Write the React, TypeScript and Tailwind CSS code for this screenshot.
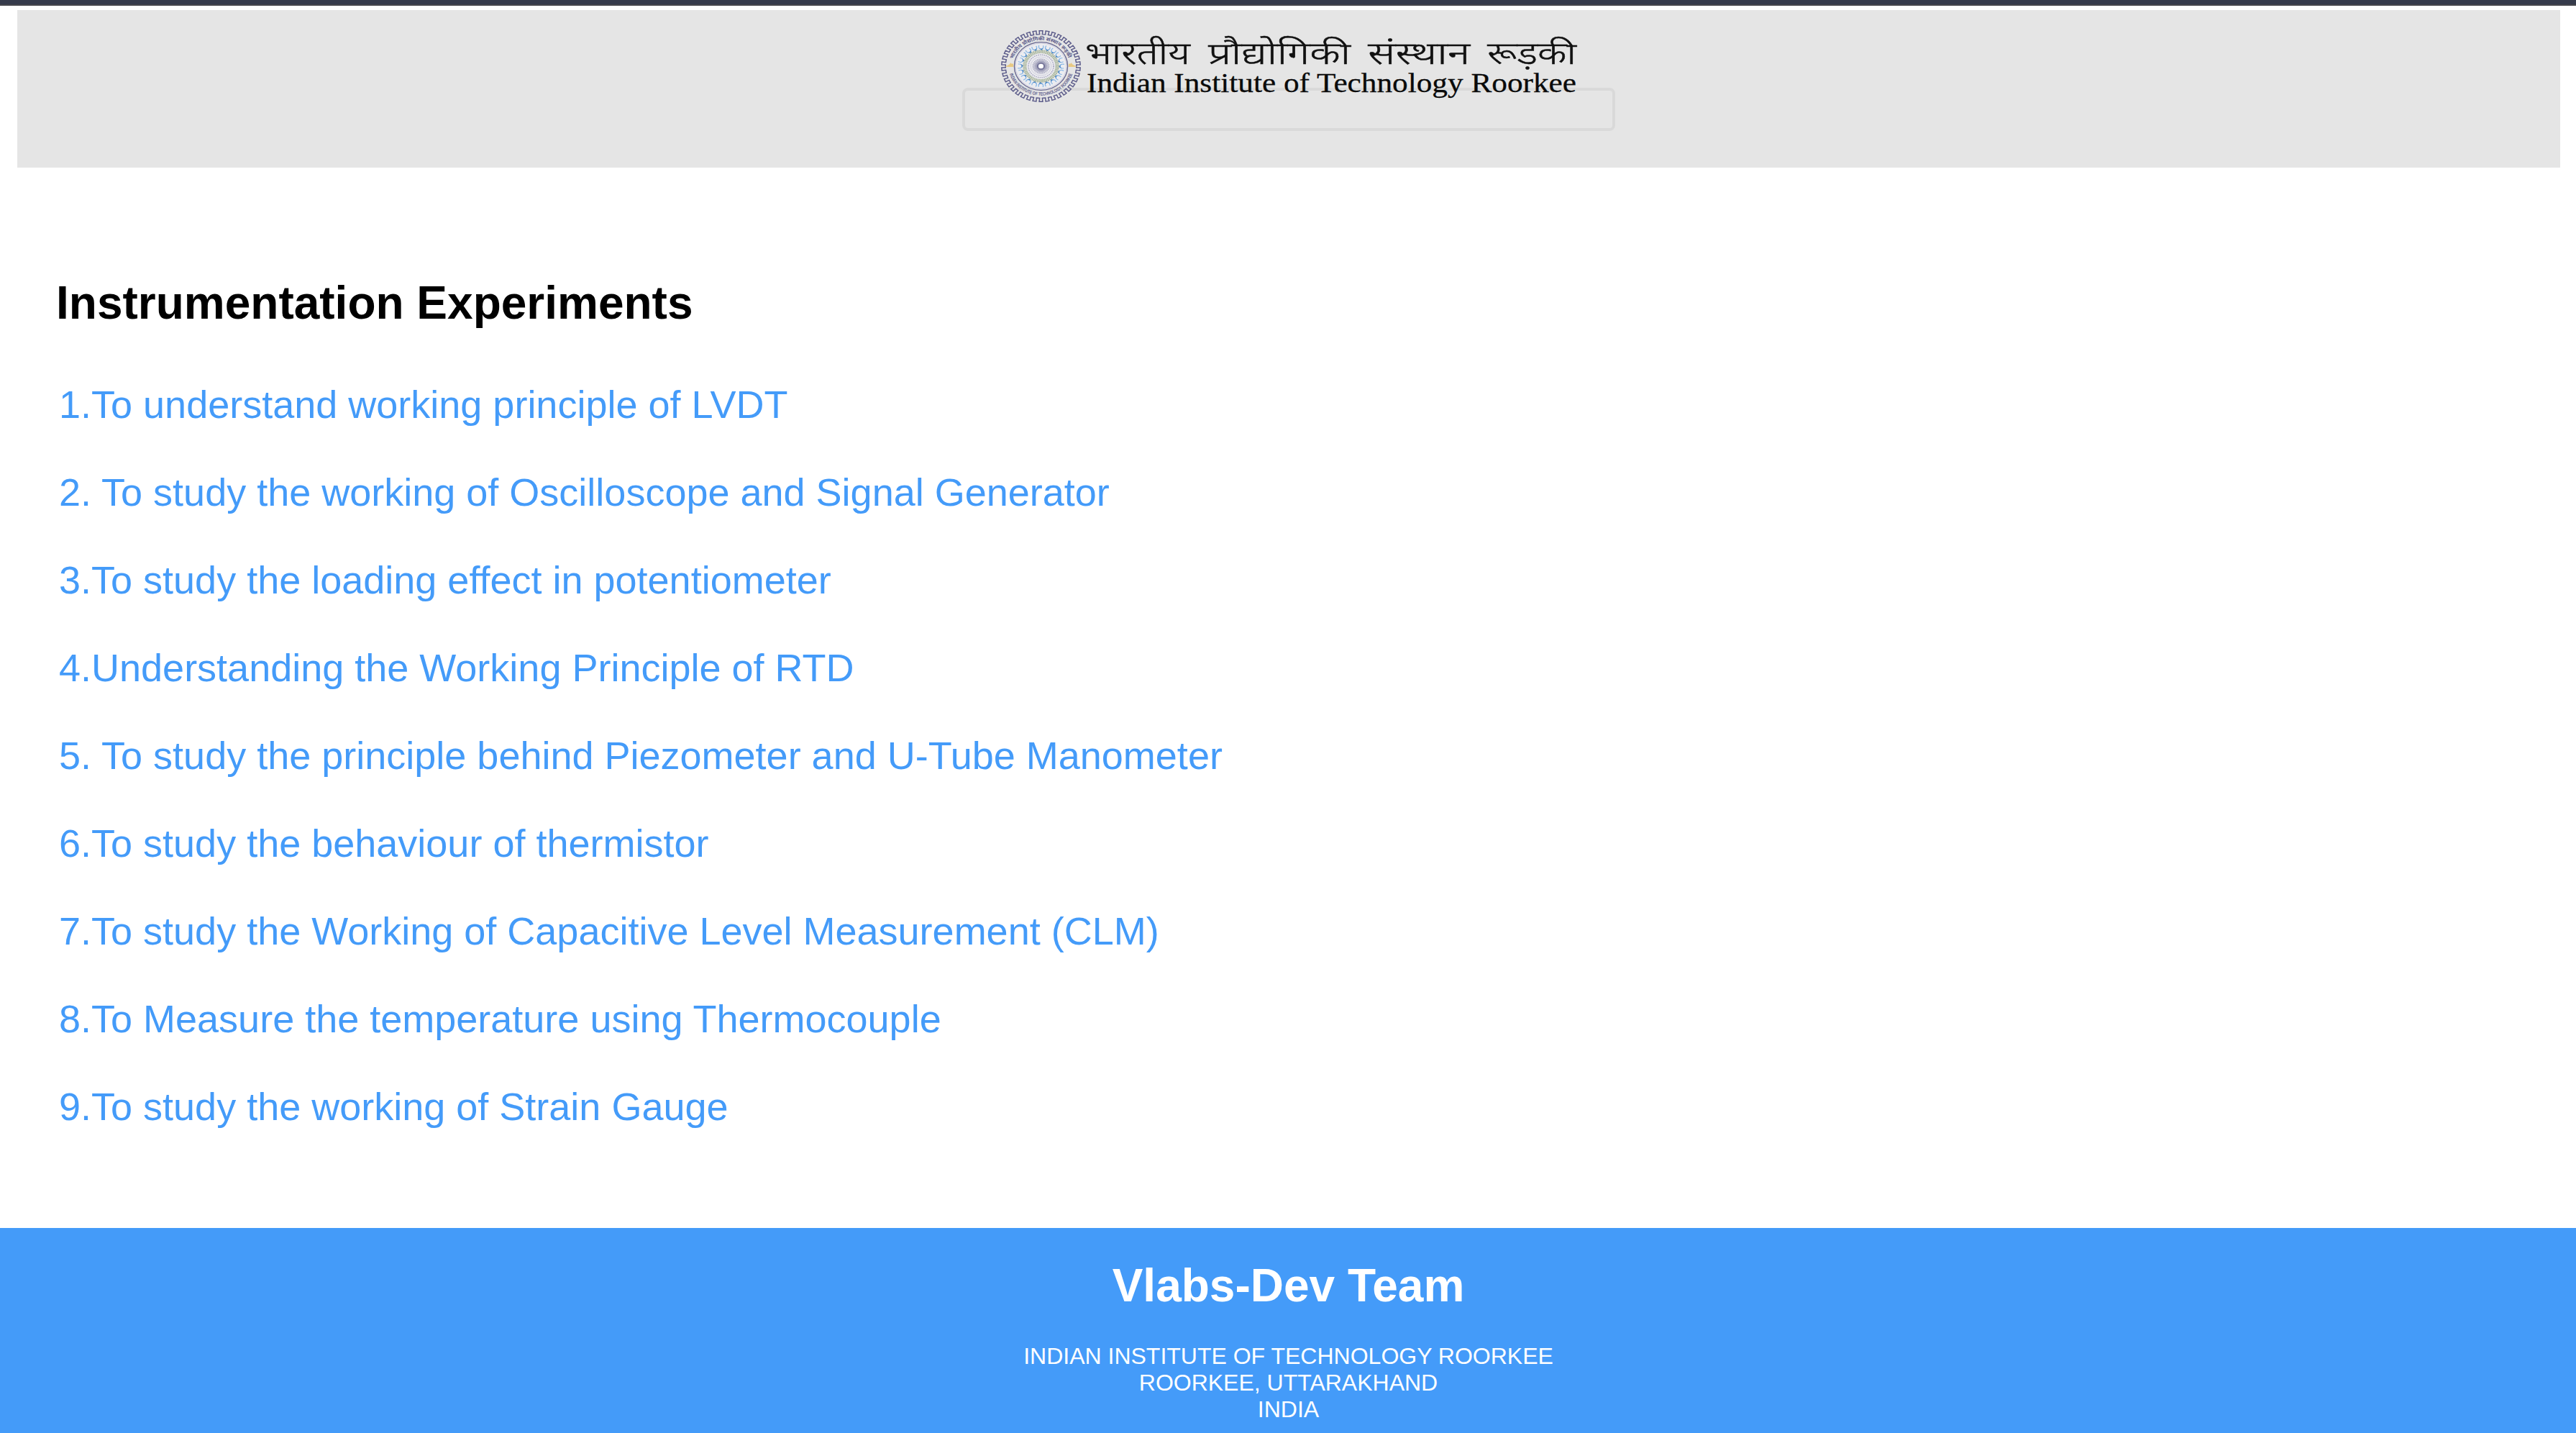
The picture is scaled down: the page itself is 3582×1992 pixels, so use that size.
import React from "react";

const EXPERIMENTS = [
  "1.To understand working principle of LVDT",
  "2. To study the working of Oscilloscope and Signal Generator",
  "3.To study the loading effect in potentiometer",
  "4.Understanding the Working Principle of RTD",
  "5. To study the principle behind Piezometer and U-Tube Manometer",
  "6.To study the behaviour of thermistor",
  "7.To study the Working of Capacitive Level Measurement (CLM)",
  "8.To Measure the temperature using Thermocouple",
  "9.To study the working of Strain Gauge",
];

const HINDI_WORDS = [
  { text: "भारतीय", x: 117, width: 146 },
  { text: "प्रौद्योगिकी", x: 288, width: 198 },
  { text: "संस्थान", x: 510, width: 142 },
  { text: "रूड़की", x: 676, width: 124 },
];

const TEETH = 38;

function polar(radius: number, turn: number) {
  const a = turn * Math.PI * 2 - Math.PI / 2;
  return `${(50 + radius * Math.cos(a)).toFixed(2)} ${(50 + radius * Math.sin(a)).toFixed(2)}`;
}

// Outline of the cog wheel: outer and root radius alternate around the circle.
function gearPath() {
  const points: string[] = [];
  for (let i = 0; i < TEETH; i++) {
    points.push(polar(49.3, (i - 0.27) / TEETH));
    points.push(polar(49.3, (i + 0.27) / TEETH));
    points.push(polar(44.4, (i + 0.23) / TEETH));
    points.push(polar(44.4, (i + 0.77) / TEETH));
  }
  return `M${points.join("L")}Z`;
}

function Emblem() {
  const flames = Array.from({ length: 20 }, (_, i) => i * 18);
  const rays = Array.from({ length: 28 }, (_, i) => (i * 360) / 28);
  return (
    <svg x="0" y="0" width="111" height="100" viewBox="0 0 100 100" preserveAspectRatio="none">
      <defs>
        <path id="arc-top" d="M14 50A36 36 0 0 1 86 50" />
        <path id="arc-bottom" d="M9.2 50A40.8 40.8 0 0 0 90.8 50" />
      </defs>
      <path d={gearPath()} fill="none" stroke="#5c5c8a" strokeWidth="1.35" />
      <circle cx="50" cy="50" r="33.4" fill="#ececf0" stroke="#66668f" strokeWidth="1.3" />
      <circle cx="50" cy="50" r="31.8" fill="none" stroke="#b4b4cb" strokeWidth="0.5" />
      <text fontSize="7" fontWeight="700" fill="#5f5f8c" fontFamily="'Noto Sans', sans-serif">
        <textPath href="#arc-top" startOffset="10">
          भारतीय प्रौद्योगिकी संस्थान रूड़की
        </textPath>
      </text>
      <text fontSize="6.4" fontWeight="700" fill="#5f5f8c" fontFamily="'Liberation Sans', sans-serif">
        <textPath href="#arc-bottom" startOffset="11" textLength="106" lengthAdjust="spacingAndGlyphs">
          INDIAN INSTITUTE OF TECHNOLOGY ROORKEE
        </textPath>
      </text>
      <path d="M5 50.6L8 49L10.5 47.4L12 45.2L13.4 46.8L15.4 46.4V51H9Z" fill="#e8c983" />
      <path d="M95 50.6L92 49L89.5 47.4L88 45.2L86.6 46.8L84.6 46.4V51H91Z" fill="#e8c983" />
      {flames.map((a) => (
        <g key={a} transform={`rotate(${a} 50 50)`}>
          <path d="M47.4 20.8Q46.4 26 50.2 26.4Q53.8 25.6 52.8 21.4" fill="none" stroke="#8ab8e6" strokeWidth="1.2" />
          <path d="M47.6 24.2Q50 27.4 53 24.2L50.8 28.4Z" fill="#4683c4" />
        </g>
      ))}
      <circle cx="50" cy="50" r="20.4" fill="none" stroke="#a9b69e" strokeWidth="4.8" strokeDasharray="1.6 0.6" />
      <circle cx="50" cy="50" r="20.4" fill="none" stroke="#c9d0bd" strokeWidth="1.2" strokeDasharray="1.3 1.7" />
      <circle cx="50" cy="50" r="15.8" fill="none" stroke="#a9a9c2" strokeWidth="1.6" strokeDasharray="1.4 1.1" />
      <circle cx="50" cy="50" r="13" fill="none" stroke="#c9c9d9" strokeWidth="0.8" />
      <circle cx="50" cy="50" r="10.6" fill="#d3d3df" />
      {rays.map((a) => (
        <path key={a} d="M50 39V45" stroke="#9c9cb6" strokeWidth="0.6" transform={`rotate(${a} 50 50)`} />
      ))}
      <circle cx="50" cy="50" r="7.4" fill="#a6a6be" />
      <circle cx="50" cy="50" r="5.2" fill="#77779b" />
      <circle cx="50" cy="50" r="3.2" fill="#ffffff" />
    </svg>
  );
}

function InstituteLogo() {
  return (
    <svg className="relative block h-[112px] w-[806px]" viewBox="0 0 806 112">
      <Emblem />
      {HINDI_WORDS.map((w) => (
        <text
          key={w.text}
          x={w.x}
          y="47"
          fontSize="42.5"
          fontWeight="300"
          fill="#111111"
          stroke="#111111"
          strokeWidth="0.5"
          fontFamily="'Noto Sans', 'Noto Sans Devanagari', sans-serif"
          textLength={w.width}
          lengthAdjust="spacingAndGlyphs"
        >
          {w.text}
        </text>
      ))}
      <text
        x="119"
        y="85.5"
        fontSize="38.5"
        fill="#0a0a0a"
        stroke="#0a0a0a"
        strokeWidth="0.3"
        fontFamily="'Liberation Serif', serif"
        textLength="681"
        lengthAdjust="spacingAndGlyphs"
      >
        Indian Institute of Technology Roorkee
      </text>
    </svg>
  );
}

export default function App() {
  return (
    <div className="flex h-[1992px] w-full flex-col overflow-hidden bg-white font-['Liberation_Sans',Arial,sans-serif]">
      <div className="h-2 shrink-0 border-b-2 border-[#46474c] bg-[#363b4b]" />

      <header className="mt-1.5 ml-6 mr-[22px] h-[219px] shrink-0 bg-[#e5e5e5]">
        <div className="mx-auto flex w-[908px] flex-col pt-[108px]">
          <div className="h-[60px] rounded-lg border-4 border-[#d9d9d9] pl-[50px]">
            <div className="-mt-[84px]">
              <InstituteLogo />
            </div>
          </div>
        </div>
      </header>

      <main className="flex-1 pl-[78px] pt-[151px]">
        <h1 className="text-[64px] leading-[74px] font-bold text-black">Instrumentation Experiments</h1>
        <ul className="mt-[73px] flex flex-col gap-[60px] pl-1">
          {EXPERIMENTS.map((e) => (
            <li key={e} className="text-[54px] leading-[62px] text-[#449bf9]">
              <a className="whitespace-pre">{e}</a>
            </li>
          ))}
        </ul>
      </main>

      <footer className="h-[285px] shrink-0 bg-[#449bf9] pt-[43px] pl-px text-center text-white">
        <h2 className="text-[64px] leading-[74px] font-bold">Vlabs-Dev Team</h2>
        <p className="mt-[43px] text-[32px] leading-[37px]">
          INDIAN INSTITUTE OF TECHNOLOGY ROORKEE
          <br />
          ROORKEE, UTTARAKHAND
          <br />
          INDIA
        </p>
      </footer>
    </div>
  );
}
